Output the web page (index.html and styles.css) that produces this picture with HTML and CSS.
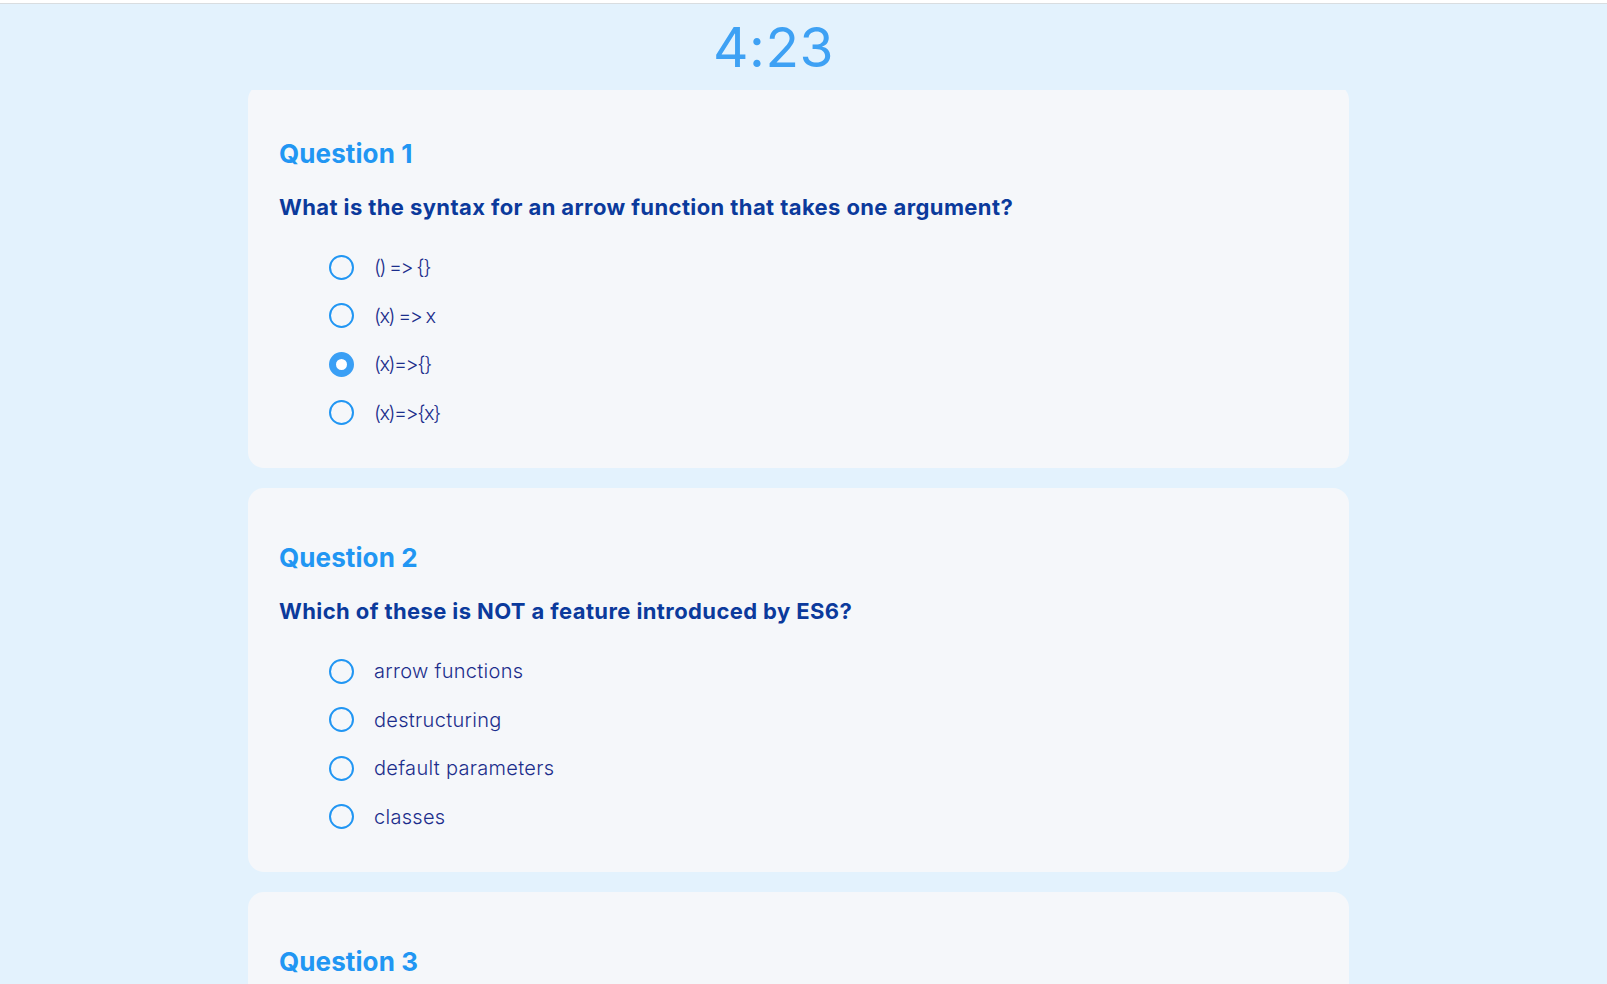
FILE: index.html
```html
<!DOCTYPE html>
<html lang="en">
<head>
<meta charset="utf-8">
<title>Quiz</title>
<link rel="stylesheet" href="styles.css">
</head>
<body>
<div class="topstrip"></div>
<header class="timer-bar"><span class="timer">4:23</span></header>
<main class="quiz">
  <section class="card">
    <h2 class="q-title">Question 1</h2>
    <p class="q-text">What is the syntax for an arrow function that takes one argument?</p>
    <div class="options">
      <label class="option"><span class="radio"></span><span class="opt-text code">() =&gt; {}</span></label>
      <label class="option"><span class="radio"></span><span class="opt-text code">(x) =&gt; x</span></label>
      <label class="option"><span class="radio checked"></span><span class="opt-text code">(x)=&gt;{}</span></label>
      <label class="option"><span class="radio"></span><span class="opt-text code">(x)=&gt;{x}</span></label>
    </div>
  </section>
  <section class="card">
    <h2 class="q-title">Question 2</h2>
    <p class="q-text">Which of these is NOT a feature introduced by ES6?</p>
    <div class="options">
      <label class="option"><span class="radio"></span><span class="opt-text">arrow functions</span></label>
      <label class="option"><span class="radio"></span><span class="opt-text">destructuring</span></label>
      <label class="option"><span class="radio"></span><span class="opt-text">default parameters</span></label>
      <label class="option"><span class="radio"></span><span class="opt-text">classes</span></label>
    </div>
  </section>
  <section class="card">
    <h2 class="q-title">Question 3</h2>
  </section>
</main>
</body>
</html>
```

FILE: styles.css
```css
html, body {
  margin: 0;
  padding: 0;
}
body {
  background: #e3f2fd;
  font-family: "Inter", "Noto Sans", sans-serif;
  color: #0d3a9b;
}
.topstrip {
  height: 3px;
  background: #ffffff;
  border-bottom: 1px solid #d9dde0;
}
.timer-bar {
  position: sticky;
  top: 0;
  z-index: 2;
  height: 86px;
  background: #e3f2fd;
  text-align: center;
  padding-right: 60px;
}
.timer {
  font-size: 55px;
  line-height: 86px;
  font-weight: 400;
  color: #3ea1f4;
  letter-spacing: 0.5px;
}
.quiz {
  width: 1101px;
  margin: -6px auto 0;
  padding-right: 10px;
  display: flex;
  flex-direction: column;
  gap: 20px;
  padding-bottom: 20px;
}
.card {
  box-sizing: border-box;
  height: 384px;
  background: #f5f7fa;
  border-radius: 16px;
  padding: 54px 31px 0;
}
.q-title {
  margin: 0;
  font-size: 26px;
  line-height: 32px;
  font-weight: 700;
  color: #2196f3;
  letter-spacing: 0.1px;
}
.q-text {
  margin: 23px 0 0;
  font-size: 22px;
  line-height: 28px;
  font-weight: 700;
  color: #0b3a9c;
  letter-spacing: 0.4px;
}
.options {
  margin: 34px 0 0 50px;
  display: flex;
  flex-direction: column;
  gap: 24.5px;
}
.option {
  display: flex;
  align-items: center;
  height: 24px;
  gap: 20px;
}
.radio {
  box-sizing: border-box;
  width: 25px;
  height: 25px;
  border: 2px solid #2196f3;
  border-radius: 50%;
  flex: none;
}
.radio.checked {
  border-width: 7px;
  border-color: #3a9ff5;
  background: #ffffff;
}
.opt-text {
  font-size: 20px;
  line-height: 24px;
  font-weight: 300;
  color: #1c2e8c;
  letter-spacing: 0.3px;
}
.opt-text.code {
  letter-spacing: -1.5px;
}
```
